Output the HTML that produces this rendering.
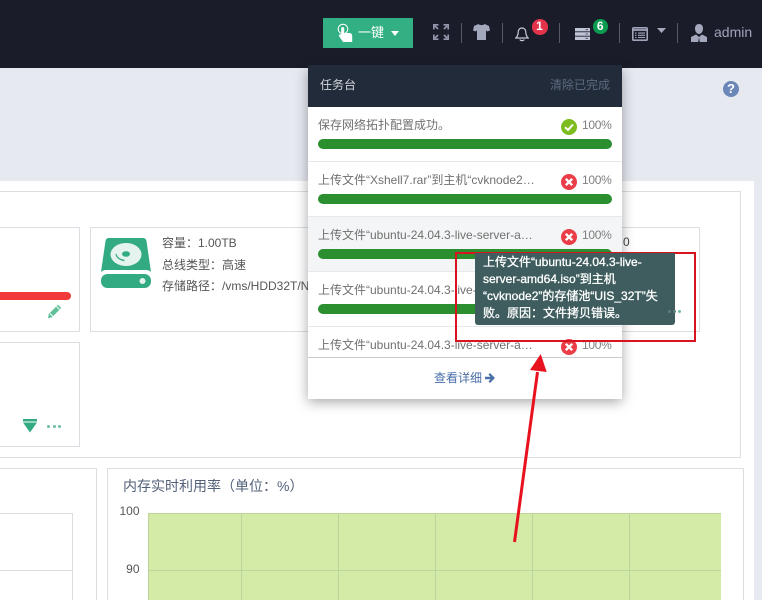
<!DOCTYPE html>
<html lang="zh">
<head>
<meta charset="utf-8">
<title>任务台</title>
<style>
html,body{margin:0;padding:0;width:762px;height:600px;overflow:hidden;background:#e6e9f0}
body{position:relative;font-family:"Liberation Sans","Noto Sans CJK SC",sans-serif;font-size:12px;color:#555}
div,span,svg{position:absolute;box-sizing:border-box}
.t{white-space:nowrap;line-height:18px;height:18px}
.card{background:#fff;border:1px solid #dcdee3}
.sep{width:1px;height:20px;top:23px;background:#555968}
.row{left:0;width:314px;height:55px;border-bottom:1px solid #e6e8ec;background:#fff;overflow:hidden}
.row .name{left:10px;top:9px;color:#707070;white-space:nowrap;line-height:18px;height:18px}
.row .pct{left:274px;top:9px;color:#808080;line-height:18px;white-space:nowrap;letter-spacing:-.3px}
.row .bar{left:10px;top:32px;width:294px;height:10px;border-radius:5px;background:#2b8f2f}
.row svg{left:253px;top:12px}
.d{width:3px;height:3px;border-radius:50%;background:#6dbfa3}
</style>
</head>
<body>
<!-- header -->
<div style="left:0;top:0;width:762px;height:68px;background:#1a1c2a"></div>

<div style="left:323px;top:18px;width:90px;height:30px;background:#33b083"></div>
<svg style="left:336px;top:23px" width="18" height="20" viewBox="0 0 18 20">
 <circle cx="7" cy="6" r="4.800" fill="none" stroke="#fff" stroke-width="1"/>
 <path d="M5.200 5.500a1.500 1.500 0 0 1 3 0V10h5q3 0 3 3v6H7L3 13c-.7-1.200.7-2.300 2.200-1.200z" fill="#fff"/>
</svg>
<div class="t" style="left:358px;top:24px;font-size:13px;color:#fff">一键</div>
<svg style="left:391px;top:31px" width="8" height="5"><path d="M0 0h8L4 5z" fill="#fff"/></svg>

<svg style="left:433px;top:24px" width="16" height="16" viewBox="0 0 16 16" fill="none" stroke="#9297ab" stroke-width="1.700">
 <path d="M.8 5.500V.8h4.700M10.500.8h4.700v4.700M.8 10.500v4.700h4.700M10.500 15.200h4.700v-4.700M2 2l3 3M14 2l-3 3M2 14l3-3M14 14l-3-3"/>
</svg>
<div class="sep" style="left:461px"></div>
<svg style="left:473px;top:24px" width="17" height="16" viewBox="0 0 17 16"><path d="M5.500 0 1 2 0 6.500l3 1L4 6v10h9V6l1 1.500 3-1L16 2 11.500 0C10.500 1.500 6.500 1.500 5.500 0z" fill="#a3a8bd"/></svg>
<div class="sep" style="left:502px"></div>
<svg style="left:515px;top:27px" width="14" height="15" viewBox="0 0 14 15" fill="none" stroke="#c8ccd8" stroke-width="1.200">
 <path d="M7 1c-2.500 0-3.800 2-3.800 4.200 0 2.800-1 4.300-2.400 5.800h12.400c-1.400-1.500-2.400-3-2.400-5.800C10.800 3 9.500 1 7 1zM5 12.500c.4 1.600 3.600 1.600 4 0"/>
</svg>
<div style="left:531.500px;top:19px;width:16px;height:15.500px;border-radius:50%;background:#e4344b;color:#fff;font-size:12px;font-weight:bold;text-align:center;line-height:15.500px">1</div>
<div class="sep" style="left:559px"></div>
<svg style="left:575px;top:28px" width="15" height="12"><path d="M0 0h15v3.400H0zM0 4.300h15v3.400H0zM0 8.600h15V12H0z" fill="#bfc4d6"/><path d="M10.500 1.700h2.500M10.500 6h2.500M10.500 10.300h2.500" stroke="#3a3d4e" stroke-width=".8"/></svg>
<div style="left:593px;top:19px;width:14.500px;height:14.500px;border-radius:50%;background:#0a9a50;color:#fff;font-size:12px;font-weight:bold;text-align:center;line-height:14.500px">6</div>
<div class="sep" style="left:619px"></div>
<svg style="left:632px;top:27px" width="16" height="14" viewBox="0 0 16 14" fill="none" stroke="#a0a5ba" stroke-width="1.600"><rect x=".8" y=".8" width="14.400" height="12.400" rx="1"/><path d="M.8 3h14.400" stroke-width="1.800"/><path d="M3 6.100h1.500M6 6.100h7M3 8.300h1.500M6 8.300h7M3 10.500h1.500M6 10.500h7" stroke-width="1.100"/></svg>
<svg style="left:657px;top:28px" width="9" height="5"><path d="M0 0h9L4.500 5z" fill="#a3a8bd"/></svg>
<div class="sep" style="left:677px"></div>
<svg style="left:691px;top:24px" width="16" height="18" viewBox="0 0 16 18">
 <path d="M8 0c2.700 0 4 2 4 4.500C12 7.300 10.300 10 8 10S4 7.300 4 4.500C4 2 5.300 0 8 0z" fill="#a3a8bd"/>
 <path d="M5 10.500 0 13v5h16v-5l-5-2.500L8 13z" fill="#a3a8bd"/><path d="M8 13.500l-.8 4.500h1.600z" fill="#1a1c2a"/>
</svg>
<div class="t" style="left:714px;top:23px;font-size:14px;color:#a0a4b8">admin</div>

<!-- question -->
<div style="left:723px;top:81px;width:16px;height:16px;border-radius:50%;background:#6b87b8;color:#fff;font-size:13px;font-weight:bold;text-align:center;line-height:16px">?</div>

<!-- main white panel -->
<div style="left:0;top:181px;width:754px;height:419px;background:#fff"></div>
<div style="left:-2px;top:191px;width:743px;height:267px;background:#fff;border:1px solid #dcdee3"></div>

<!-- card 1 -->
<div class="card" style="left:-2px;top:227px;width:82px;height:105px"></div>
<div style="left:0;top:292px;width:71px;height:8px;background:#f23a3a;border-radius:0 4px 4px 0"></div>
<svg style="left:47px;top:304px" width="15" height="15" viewBox="0 0 15 15"><path d="M11 .8 14.200 4 5 13.200 1 14.200 1.800 10z" fill="#5fc09a"/><path d="M9.500 2.500l3 3M3 9.500l3 3" stroke="#fff" stroke-width=".9"/></svg>

<!-- card 2 -->
<div class="card" style="left:90px;top:227px;width:610px;height:105px"></div>
<svg style="left:101px;top:238px" width="50" height="50" viewBox="0 0 50 50">
 <path d="M8 0h34c2 0 3 1 3.500 3L50 34c-1.500-1.300-3-2-5-2H5c-2 0-3.500.7-5 2L4.500 3C5 1 6 0 8 0z" fill="#33ab82"/>
 <ellipse cx="25" cy="16.500" rx="15.500" ry="11.500" fill="#e4f3ee"/>
 <ellipse cx="25" cy="16" rx="4" ry="2.800" fill="#33ab82"/>
 <path d="M15 16c.5 3.500 4 6 8.500 6.500" fill="none" stroke="#33ab82" stroke-width="1.200"/>
 <rect x="0" y="36" width="50" height="14" rx="6.500" fill="#33ab82"/>
 <circle cx="41.500" cy="43" r="3" fill="#e4f3ee"/>
</svg>
<div class="t" style="left:162px;top:234px;color:#555">容量：1.00TB</div>
<div class="t" style="left:162px;top:256px;color:#555">总线类型：高速</div>
<div class="t" style="left:162px;top:277px;color:#555">存储路径：/vms/HDD32T/N</div>
<div class="t" style="left:623px;top:233px;color:#444">0</div>

<!-- card 3 -->
<div class="card" style="left:-2px;top:342px;width:82px;height:105px"></div>
<svg style="left:23px;top:419px" width="14" height="14"><path d="M0 0h14v2.500H0zM0 3.500h14L7 13.500z" fill="#33ab82"/></svg>
<div class="d" style="left:47px;top:425px"></div>
<div class="d" style="left:53px;top:425px"></div>
<div class="d" style="left:58px;top:425px"></div>

<!-- bottom panels -->
<div class="card" style="left:-2px;top:468px;width:99px;height:140px"></div>
<div style="left:-2px;top:513px;width:75px;height:100px;border:1px solid #dcdee3"></div>
<div style="left:0;top:570px;width:72px;height:1px;background:#dcdee3"></div>

<div class="card" style="left:107px;top:468px;width:637px;height:140px"></div>
<div class="t" style="left:123px;top:477px;font-size:14px;color:#52607a">内存实时利用率（单位：%）</div>
<div class="t" style="left:110px;width:29.500px;top:502px;text-align:right;color:#555">100</div>
<div class="t" style="left:110px;width:29.500px;top:560px;text-align:right;color:#555">90</div>
<div style="left:148px;top:513px;width:572.500px;height:90px;background:#d4eba8;border-top:1px solid #bdd49c"></div>
<div style="left:148px;top:570px;width:572.500px;height:1px;background:#bdd49c"></div>
<div style="left:148px;top:513px;width:1px;height:90px;background:#bdd49c"></div>
<div style="left:241px;top:513px;width:1px;height:90px;background:#bdd49c"></div>
<div style="left:338px;top:513px;width:1px;height:90px;background:#bdd49c"></div>
<div style="left:435px;top:513px;width:1px;height:90px;background:#bdd49c"></div>
<div style="left:532px;top:513px;width:1px;height:90px;background:#bdd49c"></div>
<div style="left:629px;top:513px;width:1px;height:90px;background:#bdd49c"></div>

<!-- popup -->
<div style="left:308px;top:67px;width:314px;height:332px;background:#fff;box-shadow:0 3px 12px rgba(0,0,0,.35)"></div>
<div style="left:308px;top:65px;width:314px;height:42px;background:#222b3a"></div>
<div class="t" style="left:320px;top:76px;color:#d3d6dc">任务台</div>
<div class="t" style="left:550px;top:76px;color:#5c6a80">清除已完成</div>

<div style="left:308px;top:107px;width:314px;height:250px;overflow:hidden">
 <div class="row" style="top:0">
  <div class="name">保存网络拓扑配置成功。</div>
  <svg width="16" height="16" viewBox="0 0 16 16"><circle cx="8" cy="8" r="8" fill="#7cbc1c"/><path d="M4 8.200 7 11l5-5.500" fill="none" stroke="#fff" stroke-width="2"/></svg>
  <div class="pct">100%</div><div class="bar"></div>
 </div>
 <div class="row" style="top:55px">
  <div class="name">上传文件“Xshell7.rar”到主机“cvknode2…</div>
  <svg width="16" height="16" viewBox="0 0 16 16"><circle cx="8" cy="8" r="8" fill="#ea3d48"/><path d="M4.800 4.800l6.400 6.400M11.200 4.800l-6.400 6.400" stroke="#fff" stroke-width="2.400"/></svg>
  <div class="pct">100%</div><div class="bar"></div>
 </div>
 <div class="row" style="top:110px;background:#f4f5f6">
  <div class="name">上传文件“ubuntu-24.04.3-live-server-a…</div>
  <svg width="16" height="16" viewBox="0 0 16 16"><circle cx="8" cy="8" r="8" fill="#ea3d48"/><path d="M4.800 4.800l6.400 6.400M11.200 4.800l-6.400 6.400" stroke="#fff" stroke-width="2.400"/></svg>
  <div class="pct">100%</div><div class="bar"></div>
 </div>
 <div class="row" style="top:165px">
  <div class="name">上传文件“ubuntu-24.04.3-live-server-a…</div>
  <svg width="16" height="16" viewBox="0 0 16 16"><circle cx="8" cy="8" r="8" fill="#ea3d48"/><path d="M4.800 4.800l6.400 6.400M11.200 4.800l-6.400 6.400" stroke="#fff" stroke-width="2.400"/></svg>
  <div class="pct">100%</div><div class="bar"></div>
 </div>
 <div class="row" style="top:220px">
  <div class="name">上传文件“ubuntu-24.04.3-live-server-a…</div>
  <svg width="16" height="16" viewBox="0 0 16 16"><circle cx="8" cy="8" r="8" fill="#ea3d48"/><path d="M4.800 4.800l6.400 6.400M11.200 4.800l-6.400 6.400" stroke="#fff" stroke-width="2.400"/></svg>
  <div class="pct">100%</div>
 </div>
</div>
<div style="left:308px;top:357px;width:314px;height:1px;background:#c9ccd2"></div>
<div class="t" style="left:434px;top:369px;color:#4a6ea8">查看详细</div>
<svg style="left:484px;top:372px" width="12" height="12" viewBox="0 0 12 12"><path d="M6 1l5 5-5 5-1.500-1.500L6.500 7.200H1V4.800h5.500L4.500 2.500z" fill="#4a6ea8"/></svg>

<!-- annotation rect -->
<div style="left:454.500px;top:251.500px;width:241.500px;height:90.500px;border:2.500px solid #d8141f"></div>
<!-- tooltip -->
<div style="left:475px;top:253px;width:200px;height:72px;background:#3f5d5e;border-radius:0 0 3px 3px;color:#fff;font-size:12px;white-space:nowrap;-webkit-text-stroke:.3px #fff"><div class="t" style="left:8px;top:1px;line-height:17px">上传文件“ubuntu-24.04.3-live-</div><div class="t" style="left:8px;top:18px;line-height:17px">server-amd64.iso”到主机</div><div class="t" style="left:8px;top:35px;line-height:17px">“cvknode2”的存储池“UIS_32T”失</div><div class="t" style="left:8px;top:52px;line-height:17px">败。原因：文件拷贝错误。</div></div>
<div class="d" style="left:668px;top:310px;background:#5a7f7d"></div>
<div class="d" style="left:673px;top:310px;background:#5a7f7d"></div>
<div class="d" style="left:678px;top:310px"></div>
<!-- arrow -->
<svg style="left:0;top:0" width="762" height="600"><path d="M514.500 542 537.500 372" stroke="#e8121f" stroke-width="3" fill="none"/><path d="M540.700 354 546.700 372 530 370z" fill="#e8121f"/></svg>
</body>
</html>
